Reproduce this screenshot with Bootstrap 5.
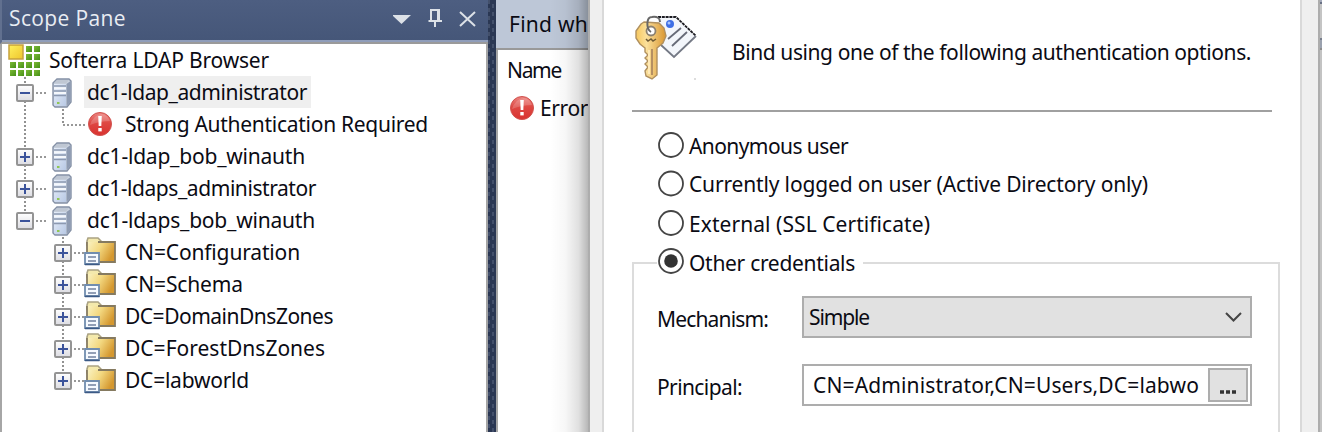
<!DOCTYPE html>
<html lang="en">
<head>
<meta charset="utf-8">
<title>LDAP Browser</title>
<link rel="stylesheet" href="https://cdn.jsdelivr.net/npm/bootstrap@5.3.0/dist/css/bootstrap.min.css">
<script src="https://cdn.jsdelivr.net/npm/bootstrap@5.3.0/dist/js/bootstrap.bundle.min.js"></script>
<style>
body{width:1322px;height:432px;font-family:"Noto Sans",sans-serif;font-size:21px;line-height:32px;color:#0b0b14;background:#fff;font-variant-ligatures:none}
svg{display:block;flex:none}
[data-w]{white-space:nowrap}
.scope-pane{width:488px}
.scope-title{height:44px;background:linear-gradient(#4d5e81,#455678);border-bottom:2px solid #9a9a9a;border-left:2px solid #61708f;box-shadow:inset 0 -2px #8f9dba;color:#e9edf3;font-family:"Open Sans",sans-serif;font-size:21px;padding:0 9px 6px 7px}
.tree-box{border:solid #a6a6a6;border-width:0 2px;padding-left:6px}
.tree-line{height:32px}
.picked{background:#efefef;height:32px;width:227px;padding-left:3px;margin-left:-3px}
.splitter{width:8px;background-color:#2a3753;background-image:linear-gradient(#43506b 50%,transparent 50%),linear-gradient(transparent 50%,#43506b 50%);background-size:2px 8px,2px 8px;background-position:0 0,4px 0;background-repeat:repeat-y}
.results-pane{width:92px}
.find-bar{height:50px;background:#bdc7d7;border-bottom:2px solid #999;padding:0 0 0 13px}
.results-list{border-left:2px solid #a6a6a6;padding:4px 0 0 9px}
.error-line{padding-top:6px}
.pane-shade{top:0;bottom:0;right:0;width:38px;background:linear-gradient(90deg,transparent,rgba(0,0,0,.03) 40%,rgba(0,0,0,.12) 75%,rgba(0,0,0,.28))}
.dlg{width:732px;border:solid #adadad;border-width:0 2px}
.dlg-frame{background:#efefef;padding:0 14px 0 12px}
.dlg-page{background:#fff;border:solid #d9d9d9;border-width:0 2px;padding:0 20px 0 28px;width:700px}
.dlg-head{height:112px;border-bottom:2px solid #a0a0a0;width:640px}
.dlg-intro{padding-top:36px}
.dlg-body{height:320px;padding-top:16px}
.option{height:39px;margin-left:25px}
.option span{padding-top:2px}
.option.tight span{padding-top:1px}
.cred-group{border:2px solid #dcdcdc;border-bottom:0;height:170px;width:648px;margin-top:17px}
.cred-legend{height:24px;margin:-15px 0 23px 23px;background:#fff;width:206px}
.field-line{margin:0 0 26px 23px}
.field-label{width:145px;padding-top:4px}
.field-box{width:450px;height:42px;border:2px solid #adadad;background:#fff}
.field-box.combo{background:#e1e1e1;padding:0 8px 0 5px}
.field-value{padding-left:9px}
.more-btn{width:40px;height:34px;border:2px solid #adadad;background:#e1e1e1;margin-right:2px}
.right-edge{width:2px;background:linear-gradient(#a4aabb 0 2px,#687084 2px 4px,#c4c4c4 4px 38px,#777e8c 38px 40px,#9aa1ae 40px 48px,#8c8c8c 48px 50px,#c3c3c3 50px)}
</style>
</head>
<body class="d-flex overflow-hidden">
<svg width="0" height="0" class="position-absolute" aria-hidden="true">
 <defs>
  <linearGradient id="box" x2="0" y2="1"><stop stop-color="#fff"/><stop offset="1" stop-color="#dcdce2"/></linearGradient>
  <linearGradient id="front" x2="1" y2="1"><stop stop-color="#e6eefa"/><stop offset="1" stop-color="#b9c9e4"/></linearGradient>
  <linearGradient id="fold" x2="1" y2=".4"><stop stop-color="#faf3c4"/><stop offset=".5" stop-color="#f3d880"/><stop offset="1" stop-color="#d5982f"/></linearGradient>
  <linearGradient id="red" x2="0" y2="1"><stop stop-color="#ec8581"/><stop offset=".45" stop-color="#de4843"/><stop offset="1" stop-color="#d9322f"/></linearGradient>
  <linearGradient id="gold" x2="1"><stop stop-color="#f6c75e"/><stop offset=".35" stop-color="#fbe09b"/><stop offset="1" stop-color="#d9952f"/></linearGradient>
  <linearGradient id="yel" x2="1" y2="1"><stop stop-color="#fff15e"/><stop offset="1" stop-color="#eec52c"/></linearGradient>
  <linearGradient id="grn" x2="1" y2="1"><stop stop-color="#7cba36"/><stop offset="1" stop-color="#458f17"/></linearGradient>
  <symbol id="minus" viewBox="0 0 18 18"><rect x="1" y="1" width="16" height="16" rx="1" fill="url(#box)" stroke="#949494" stroke-width="2"/><path d="M4 9H14" stroke="#3b539b" stroke-width="2"/></symbol>
  <symbol id="plus" viewBox="0 0 18 18"><use href="#minus"/><path d="M9 4V14" stroke="#3b539b" stroke-width="2"/></symbol>
  <symbol id="server" viewBox="0 0 20 30">
   <path d="M1 5L5 1H17L19 3V24L15 29H3L1 27Z" fill="#cbd3df" stroke="#8490a5" stroke-width="1.4"/>
   <path d="M14.500 6L18.500 3V24L14.500 28Z" fill="#8e9bb2"/>
   <path d="M2 6H14V28H3L2 27Z" fill="url(#front)"/>
   <path d="M2 5.500L5 2H17L14 5.500Z" fill="#bfc7d3"/>
   <path d="M2 8H14M2 13H14M2 17.500H14" stroke="#8c99b0" stroke-width="1.300"/>
   <path d="M2 10.200H14M2 15H14" stroke="#f5f8fc" stroke-width="2"/>
   <rect x="5" y="24" width="2.500" height="2" fill="#8fc653"/>
  </symbol>
  <symbol id="folder" viewBox="0 0 32 30">
   <path d="M3 4L4 1H14L17 4V8H3Z" fill="#f4e9ac" stroke="#aba383" stroke-width="1.600"/>
   <path d="M3 5H31V25H3Z" fill="url(#fold)"/><path d="M3 25V5M14 5H31V25H3" fill="none" stroke="#857a60" stroke-width="1.800"/>
   <path d="M1 16H15V27H1Z" fill="#f6faff" stroke="#718daf" stroke-width="1.800"/>
   <path d="M1 27.500H15.500" stroke="#3c5a86" stroke-width="1.500"/>
   <path d="M4 20H12M4 24H12" stroke="#71819f" stroke-width="1.700"/>
  </symbol>
  <symbol id="error" viewBox="0 0 24 24">
   <circle cx="12" cy="12" r="11.500" fill="url(#red)" stroke="#d0524e"/>
   <path d="M2 13Q5 3 14 2Q20 3 22 9Q12 9 2 13Z" fill="#fff" opacity=".18"/>
   <path d="M10.200 4H13.800L13.300 14H10.700Z" fill="#fff"/><rect x="10.300" y="16" width="3.400" height="3.400" fill="#fff"/>
  </symbol>
 </defs>
</svg>

<section class="scope-pane d-flex flex-column flex-shrink-0">
 <header class="scope-title d-flex align-items-center justify-content-between">
  <span data-w="115">Scope Pane</span>
  <svg width="86" height="20" viewBox="0 0 86 20" fill="none" stroke="#dce1e7" stroke-width="2">
   <path d="M-2 7H17L7.500 16Z" fill="#dce1e7" stroke="none" transform="translate(1 0)"/>
   <path d="M38 12V2H46V12M45 2V12M35.500 13H49M42 13V19"/>
   <path d="M67 4L82 18M82 4L67 18"/>
  </svg>
 </header>
 <div class="tree-box flex-grow-1">
  <div class="tree-line d-flex">
   <svg width="41" height="32">
    <rect x="1" y="1" width="14" height="14" fill="url(#yel)" stroke="#c6a13c" stroke-width="1.500"/>
    <g fill="url(#grn)">
     <rect x="18" y="2" width="6" height="6"/><rect x="26" y="2" width="6" height="6"/><rect x="18" y="10" width="6" height="6"/><rect x="26" y="10" width="6" height="6"/>
     <rect x="2" y="18" width="6" height="6"/><rect x="10" y="18" width="6" height="6"/><rect x="18" y="18" width="6" height="6"/><rect x="26" y="18" width="6" height="6"/>
     <rect x="2" y="26" width="6" height="6"/><rect x="10" y="26" width="6" height="6"/><rect x="18" y="26" width="6" height="6"/><rect x="26" y="26" width="6" height="6"/>
    </g>
   </svg><span data-w="218">Softerra LDAP Browser</span>
  </div>
  <div class="tree-line d-flex">
   <svg width="79" height="32"><path d="M17 1V32M28 17H40" stroke="#777" stroke-width="1.600" stroke-dasharray="2 2"/><use href="#minus" x="8" y="8" width="18" height="18"/><use href="#server" x="44" y="2" width="20" height="30"/></svg>
   <span class="picked"><span data-w="218">dc1-ldap_administrator</span></span>
  </div>
  <div class="tree-line d-flex">
   <svg width="117" height="32"><path d="M17 1V32M55 1V17H78" fill="none" stroke="#777" stroke-width="1.600" stroke-dasharray="2 2"/><use href="#error" x="80" y="4" width="24" height="24"/></svg>
   <span data-w="301">Strong Authentication Required</span>
  </div>
  <div class="tree-line d-flex">
   <svg width="79" height="32"><path d="M17 1V32M28 17H40" stroke="#777" stroke-width="1.600" stroke-dasharray="2 2"/><use href="#plus" x="8" y="8" width="18" height="18"/><use href="#server" x="44" y="2" width="20" height="30"/></svg>
   <span data-w="216">dc1-ldap_bob_winauth</span>
  </div>
  <div class="tree-line d-flex">
   <svg width="79" height="32"><path d="M17 1V32M28 17H40" stroke="#777" stroke-width="1.600" stroke-dasharray="2 2"/><use href="#plus" x="8" y="8" width="18" height="18"/><use href="#server" x="44" y="2" width="20" height="30"/></svg>
   <span data-w="227">dc1-ldaps_administrator</span>
  </div>
  <div class="tree-line d-flex">
   <svg width="79" height="32"><path d="M17 1V17M28 17H40" stroke="#777" stroke-width="1.600" stroke-dasharray="2 2"/><use href="#minus" x="8" y="8" width="18" height="18"/><use href="#server" x="44" y="2" width="20" height="30"/></svg>
   <span data-w="226">dc1-ldaps_bob_winauth</span>
  </div>
  <div class="tree-line d-flex">
   <svg width="117" height="32"><path d="M55 1V32M66 17H78" stroke="#777" stroke-width="1.600" stroke-dasharray="2 2"/><use href="#plus" x="46" y="8" width="18" height="18"/><use href="#folder" x="76" y="1" width="32" height="30"/></svg>
   <span data-w="173">CN=Configuration</span>
  </div>
  <div class="tree-line d-flex">
   <svg width="117" height="32"><path d="M55 1V32M66 17H78" stroke="#777" stroke-width="1.600" stroke-dasharray="2 2"/><use href="#plus" x="46" y="8" width="18" height="18"/><use href="#folder" x="76" y="1" width="32" height="30"/></svg>
   <span data-w="116">CN=Schema</span>
  </div>
  <div class="tree-line d-flex">
   <svg width="117" height="32"><path d="M55 1V32M66 17H78" stroke="#777" stroke-width="1.600" stroke-dasharray="2 2"/><use href="#plus" x="46" y="8" width="18" height="18"/><use href="#folder" x="76" y="1" width="32" height="30"/></svg>
   <span data-w="206">DC=DomainDnsZones</span>
  </div>
  <div class="tree-line d-flex">
   <svg width="117" height="32"><path d="M55 1V32M66 17H78" stroke="#777" stroke-width="1.600" stroke-dasharray="2 2"/><use href="#plus" x="46" y="8" width="18" height="18"/><use href="#folder" x="76" y="1" width="32" height="30"/></svg>
   <span data-w="198">DC=ForestDnsZones</span>
  </div>
  <div class="tree-line d-flex">
   <svg width="117" height="32"><path d="M55 1V17M66 17H78" stroke="#777" stroke-width="1.600" stroke-dasharray="2 2"/><use href="#plus" x="46" y="8" width="18" height="18"/><use href="#folder" x="76" y="1" width="32" height="30"/></svg>
   <span data-w="122">DC=labworld</span>
  </div>
 </div>
</section>

<div class="splitter flex-shrink-0"></div>

<section class="results-pane d-flex flex-column flex-shrink-0 overflow-hidden position-relative">
 <div class="find-bar d-flex align-items-center"><span data-w="77">Find wh</span></div>
 <div class="results-list flex-grow-1">
  <div data-w="52" class="d-inline-block">Name</div>
  <div class="error-line d-flex align-items-center"><svg width="33" height="24"><use href="#error" x="3" width="24" height="24"/></svg><span data-w="46">Error</span></div>
 </div>
 <div class="pane-shade position-absolute"></div>
</section>

<section class="dlg flex-shrink-0">
 <div class="dlg-frame h-100">
  <div class="dlg-page h-100">
   <div class="dlg-head d-flex">
    <svg width="100" height="84" viewBox="0 0 100 84">
     <path d="M27 17L42 16L63 36L42 57L26 43Z" fill="#f3f6fb"/>
     <path d="M26 17H44L64 36" fill="none" stroke="#1c1c22" stroke-width="1.800" stroke-dasharray="3 .8"/>
     <path d="M64 36L42 57L29 45" fill="none" stroke="#747985" stroke-width="1.800"/>
     <path d="M36 39L49 28M40 46L55 32" stroke="#676b78" stroke-width="1.800" fill="none"/>
     <circle cx="38" cy="24" r="4" fill="#3f6fe5"/><circle cx="37" cy="23" r="1.500" fill="#a8c4ff"/>
     <path d="M12 22L9 24L4 31V38L8 44L13 48V52L16 55L13 58L16 61L13 64L16 67L13 71L14 76L20 79L25 75V48L31 43L34 36L32 28L27 23Z" fill="url(#gold)" stroke="#b0905f" stroke-width="1.400"/>
     <path d="M20 49V75" stroke="#b58f62" stroke-width="2"/><path d="M17 50V74" stroke="#ffe9b6" stroke-width="2"/>
     <circle cx="19" cy="31" r="4.500" fill="#fff" stroke="#8c8170" stroke-width="1.800"/>
     <path d="M19 32C14 29 14 17 20 17Q28 16 28 22" fill="none" stroke="#686868" stroke-width="2"/>
     <path d="M14 39L16 41L19 39L21 41L24 39" fill="none" stroke="#6f5a34" stroke-width="1.500"/>
     <rect x="62" y="78" width="2" height="2" fill="#ddd"/>
    </svg>
    <span class="dlg-intro" data-w="517">Bind using one of the following authentication options.</span>
   </div>
   <div class="dlg-body overflow-hidden">
    <div class="option d-flex gap-1"><svg width="28" height="34"><circle cx="14" cy="17" r="12" fill="#fff" stroke="#444" stroke-width="1.800"/></svg><span data-w="157">Anonymous user</span></div>
    <div class="option tight d-flex gap-1"><svg width="28" height="34"><circle cx="14" cy="16.500" r="12" fill="#fff" stroke="#444" stroke-width="1.800"/></svg><span data-w="457">Currently logged on user (Active Directory only)</span></div>
    <div class="option d-flex gap-1"><svg width="28" height="34"><circle cx="14" cy="17" r="12" fill="#fff" stroke="#444" stroke-width="1.800"/></svg><span data-w="239">External (SSL Certificate)</span></div>
    <div class="cred-group">
     <div class="cred-legend d-flex align-items-center gap-1"><svg width="28" height="28"><circle cx="14" cy="14" r="12" fill="#fff" stroke="#444" stroke-width="1.800"/><circle cx="14" cy="14" r="6.800" fill="#333"/></svg><span class="pt-1" data-w="164">Other credentials</span></div>
     <div class="field-line d-flex align-items-center"><span class="field-label"><span data-w="109">Mechanism:</span></span>
      <div class="field-box combo d-flex align-items-center justify-content-between"><span data-w="58">Simple</span><svg width="17" height="12"><path d="M1 2L8.500 9.500L16 2" fill="none" stroke="#444" stroke-width="2"/></svg></div></div>
     <div class="field-line d-flex align-items-center"><span class="field-label"><span data-w="83">Principal:</span></span>
      <div class="field-box d-flex align-items-center justify-content-between"><span data-w="384" class="field-value">CN=Administrator,CN=Users,DC=labwo</span><div class="more-btn d-flex justify-content-center"><svg width="16" height="26"><path d="M0 22H4M6 22H10M12 22H16" stroke="#333" stroke-width="3.500"/></svg></div></div></div>
    </div>
   </div>
  </div>
 </div>
</section>
<div class="right-edge flex-shrink-0"></div>

<script>
document.querySelectorAll('[data-w]').forEach(function (el) {
  var r = document.createRange();
  r.selectNodeContents(el);
  var extra = (+el.dataset.w + 2 - r.getBoundingClientRect().width) / el.textContent.length;
  el.style.letterSpacing = extra.toFixed(3) + 'px';
});
</script>
</body>
</html>
